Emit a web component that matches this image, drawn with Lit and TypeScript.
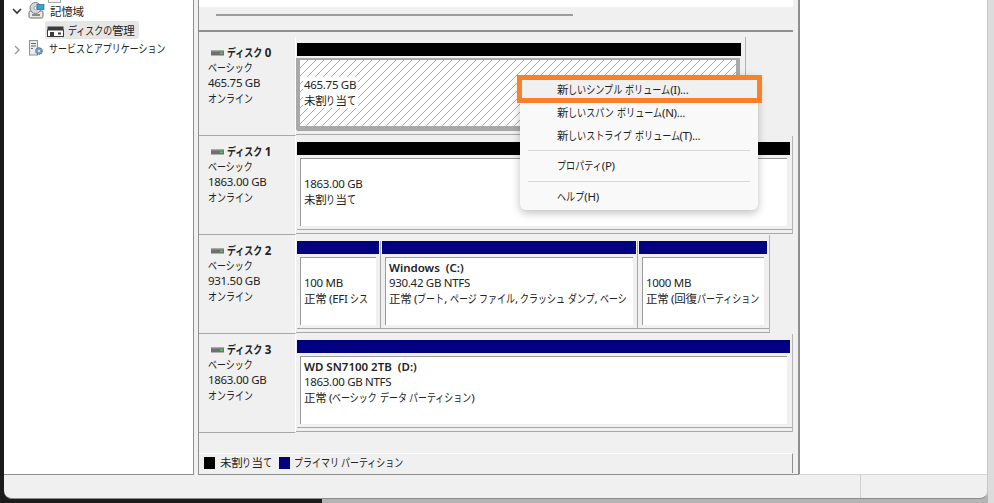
import { LitElement, html, css, svg } from "lit";
import { customElement } from "lit/decorators.js";

interface Part { w: number; color: string; lines: [string, string, string]; }
interface Disk { name: string; size: string; frame: number; parts: Part[]; selected?: boolean; }

const NAVY = "#000080";
const DISKS: Disk[] = [
  { name: "ディスク 0", size: "465.75 GB", frame: 450, selected: true,
    parts: [{ w: 444, color: "#000", lines: ["", "465.75 GB", "未割り当て"] }] },
  { name: "ディスク 1", size: "1863.00 GB", frame: 497,
    parts: [{ w: 493, color: "#000", lines: ["", "1863.00 GB", "未割り当て"] }] },
  { name: "ディスク 2", size: "931.50 GB", frame: 474,
    parts: [
      { w: 82, color: NAVY, lines: ["", "100 MB", "正常 (EFI シス"] },
      { w: 254, color: NAVY, lines: ["Windows  (C:)", "930.42 GB NTFS", "正常 (ブート, ページ ファイル, クラッシュ ダンプ, ベーシ"] },
      { w: 128, color: NAVY, lines: ["", "1000 MB", "正常 (回復パーティション"] },
    ] },
  { name: "ディスク 3", size: "1863.00 GB", frame: 497,
    parts: [{ w: 493, color: NAVY, lines: ["WD SN7100 2TB  (D:)", "1863.00 GB NTFS", "正常 (ベーシック データ パーティション)"] }] },
];

/* The reference face has narrow kana: runs of kana are set condensed, with the
   advance they would lose removed from the flow. */
const KANA_EM = 11.5;
const SCALE = 0.78;
function t(s: string, scale = SCALE, em = KANA_EM) {
  return s.split(/([\u3040-\u30FF]+)/).filter(Boolean).map((run) =>
    /^[\u3040-\u30FF]/.test(run)
      ? html`<span class="k" style="transform:scaleX(${scale});margin-right:${(-run.length * em * (1 - scale)).toFixed(2)}px">${run}</span>`
      : html`<span class="l">${run}</span>`);
}

const diskGlyph = svg`<svg class="dglyph" width="14" height="6" viewBox="0 0 14 6">
  <rect x="0" y="0" width="13" height="5.5" rx="0.6" fill="#6f6f6f"/>
  <rect x="0" y="0" width="13" height="1.4" fill="#a9a9a9"/>
  <rect x="9" y="2.5" width="3" height="1.5" fill="#57c25a"/>
</svg>`;

const storageIcon = svg`<svg class="ticon" width="17" height="17" viewBox="0 0 17 17">
  <rect x="1" y="9" width="14" height="7" rx="1.5" fill="#e9e9e6" stroke="#6d6d62"/>
  <rect x="4" y="12" width="8" height="2" fill="#8b8b80"/>
  <circle cx="7.5" cy="6" r="5.5" fill="#d5d8da" stroke="#7c8185"/>
  <circle cx="7.5" cy="6" r="1.6" fill="#fff" stroke="#7c8185" stroke-width=".7"/>
  <rect x="9" y="2.5" width="7" height="5" fill="#3ba0d2" stroke="#1f6f98" stroke-width=".7"/>
</svg>`;

const mgmtIcon = svg`<svg class="ticon" width="17" height="11" viewBox="0 0 17 11">
  <rect x="0.5" y="0.5" width="16" height="4" fill="#3b3b3b"/>
  <rect x="0.5" y="4" width="16" height="6.5" fill="#fbfbfb" stroke="#3b3b3b"/>
  <rect x="3" y="6" width="4" height="4.5" fill="#3b3b3b"/>
  <rect x="11" y="6.5" width="3" height="2" fill="#3b3b3b"/>
</svg>`;

const serviceIcon = svg`<svg class="ticon" width="16" height="16" viewBox="0 0 16 16">
  <rect x="1.5" y="0.5" width="8" height="14.5" fill="#e8eaec" stroke="#8b949c"/>
  <rect x="3" y="3" width="5" height="1" fill="#5f6b75"/>
  <rect x="3" y="5.5" width="5" height="1" fill="#5f6b75"/>
  <rect x="3" y="8" width="2" height="1" fill="#5f6b75"/>
  <circle cx="11" cy="11" r="3.2" fill="#7fa3c4" stroke="#55779a" stroke-width="1.4" stroke-dasharray="1.3 .7"/>
  <circle cx="11" cy="11" r="1.1" fill="#eef3f7"/>
</svg>`;

@customElement("app-root")
export class AppRoot extends LitElement {
  static styles = css`
    :host {
      display: block;
      width: 994px;
      height: 503px;
      overflow: hidden;
      background:
        linear-gradient(#dcdcdc, #dcdcdc) right top / 6px 100% no-repeat,
        linear-gradient(90deg, #1b1b1b 0 322px, #b4b4b4 322px);
      position: relative;
      font-family: "Noto Sans", "Noto Sans CJK JP", sans-serif;
      font-size: 11.5px;
      color: #222;
    }
    .k { display: inline-block; white-space: pre; transform-origin: 0 50%; }
    .l { white-space: pre; letter-spacing: -0.3px; }
    .win {
      margin-left: 4px;
      width: 984px;
      height: 499px;
      box-sizing: border-box;
      background: #f0f0f0;
      border-right: 1px solid #c8c8c8;
      border-bottom: 1px solid #8c8c8c;
      border-radius: 0 0 8px 8px;
      display: flex;
      flex-direction: column;
      overflow: hidden;
    }
    .main { display: flex; height: 475px; flex: none; box-sizing: border-box; }
    .tree {
      width: 190px;
      box-sizing: border-box;
      background: #fff;
      border-right: 1px solid #8f8f8f;
      border-bottom: 1px solid #8f8f8f;
      padding-top: 2px;
      flex: none;
      display: flex;
      flex-direction: column;
    }
    .tnode { display: flex; align-items: center; height: 17px; white-space: nowrap; }
    .chev { width: 24px; flex: none; display: flex; justify-content: flex-end; box-sizing: border-box; }
    .chev.down { padding: 2px 6px 0 0; }
    .chev.next { padding: 5px 7px 0 0; }
    .l1 .ticon { margin-right: 5px; flex: none; }
    .sel-row { margin: 2px 0 0 41px; height: 18px; width: 94px; background: #e6e6e6; border-radius: 3px; display: flex; align-items: center; padding-left: 2px; box-sizing: border-box; white-space: nowrap; flex: none; }
    .sel-row .ticon { margin-right: 4px; margin-top: 3px; flex: none; }
    .gap { width: 4px; flex: none; }
    .center {
      width: 600px;
      flex: none;
      box-sizing: border-box;
      border-left: 1px solid #8f8f8f;
      border-bottom: 1px solid #8f8f8f;
      display: flex;
      flex-direction: column;
      padding-right: 5px;
    }
    .top {
      height: 32px;
      box-sizing: border-box;
      background: linear-gradient(#fff 0 7px, #f0f0f0 7px);
      border-bottom: 2px solid #8f8f8f;
      padding: 14px 0 0 17px;
      flex: none;
    }
    .hbar { width: 357px; height: 2px; background: #9c9c9c; }
    .list { padding-top: 5px; flex: none; }
    .row { display: flex; height: 99px; box-sizing: border-box; }
    .label {
      width: 97px;
      flex: none;
      box-sizing: border-box;
      background: #f0f0f0;
      border-right: 1px solid #fff;
      border-bottom: 1px solid #a8a8a8;
      padding: 8px 0 0 9px;
      line-height: 15.2px;
      white-space: nowrap;
    }
    .title { display: flex; align-items: center; font-weight: 700; margin-left: 3px; }
    .dglyph { margin-right: 2px; flex: none; }
    .frame {
      box-sizing: border-box;
      height: 98px;
      padding: 6px 0 0 1px;
      border-right: 1px solid #b4b4b4;
      border-bottom: 1px solid #a8a8a8;
    }
    .parts { display: flex; height: 88px; border-bottom: 1px solid #a8a8a8; box-sizing: border-box; }
    .sep { width: 1px; background: #a8a8a8; margin: 0 1px; flex: none; }
    .part { flex: none; }
    .bar { height: 13px; }
    .vol {
      margin: 3px 3px 0 3px;
      height: 68px;
      box-sizing: border-box;
      background: #fff;
      border-top: 1px solid #9a9a9a;
      border-left: 1px solid #9a9a9a;
      padding: 1.5px 0 0 3px;
      line-height: 15.5px;
      white-space: nowrap;
      overflow: hidden;
    }
    .vol.selected {
      margin: 2px 1px 0 -1px;
      height: 72px;
      border: solid #a9a9a9;
      border-width: 2px 4px 4px 4px;
      background: repeating-linear-gradient(135deg, #fff 0 4.96px, #aaa 4.96px 5.66px);
      padding: 1.5px 0 0 3px;
    }
    .vol.selected .ln > span { display: inline-block; background: #fff; padding: 0 2px 0 1px; margin-left: -1px; }
    .vol.selected .ln { padding-left: 1px; }
    .ln { height: 15.5px; }
    .strong { font-weight: 600; }
    .strong .l { letter-spacing: 0; }
    .legend {
      margin-top: 20px;
      height: 20px;
      box-sizing: border-box;
      border-top: 1px solid #fff;
      border-right: 1px solid #8f8f8f;
      display: flex;
      align-items: center;
      padding: 0 0 2px 5px;
      white-space: nowrap;
    }
    .sw { width: 11px; height: 12px; flex: none; }
    .lt { margin: 0 7px 2px 5px; }
    .lt.second { margin-left: 4px; }
    .right { flex: 1; background: #fff; border-left: 2px solid #8f8f8f; border-bottom: 1px solid #d4d4d4; }
    .status { flex: 1; display: flex; }
    .s1 { width: 856px; border-right: 1px solid #d0d0d0; flex: none; }

    .menu {
      position: absolute;
      left: 520px;
      top: 75px;
      width: 238px;
      height: 135px;
      box-sizing: border-box;
      background: #f9f9f9;
      border-radius: 6px;
      box-shadow: 0 3px 9px rgba(0, 0, 0, 0.25);
      padding-top: 3px;
      color: #1f1f1f;
    }
    .item { height: 23px; line-height: 23px; padding-left: 37px; white-space: nowrap; }
    .item.hot { background: #f0f0f0; }
    .msep { height: 1px; background: #d9d9d9; margin: 3px 8px; }
    .msep.b { margin-top: 4px; }
    .orange {
      position: absolute;
      left: 517px;
      top: 75px;
      width: 245px;
      height: 28px;
      box-sizing: border-box;
      border: 5px solid #f98127;
      pointer-events: none;
    }
    .topstub { position: absolute; left: 48px; top: 0; width: 13px; height: 3px; background: #f4f4f4; border: 1px solid #aaa; border-top: 0; box-sizing: border-box; }
  `;

  private renderDisk(d: Disk) {
    const parts = d.parts.flatMap((p, i) => {
      const el = html`<div class="part" style="width:${p.w}px">
        <div class="bar" style="background:${p.color}"></div>
        <div class="vol ${d.selected ? "selected" : ""}">
          ${p.lines.map((l, n) =>
            html`<div class="ln ${n === 0 ? "strong" : ""}"><span>${t(l)}</span></div>`)}
        </div>
      </div>`;
      return i ? [html`<div class="sep"></div>`, el] : [el];
    });
    return html`<div class="row">
      <div class="label">
        <div class="title">${diskGlyph}<span>${t(d.name)}</span></div>
        <div>${t("ベーシック")}</div>
        <div>${t(d.size)}</div>
        <div>${t("オンライン")}</div>
      </div>
      <div class="frame" style="width:${d.frame}px">
        <div class="parts">${parts}</div>
      </div>
    </div>`;
  }

  render() {
    const M = 0.79;
    return html`
      <div class="win">
        <div class="main">
          <div class="tree">
            <div class="tnode l1">
              <div class="chev down"><svg width="10" height="7" viewBox="0 0 10 7"><path d="M1 1l4 4 4-4" fill="none" stroke="#333" stroke-width="1.6"/></svg></div>
              ${storageIcon}<span>${t("記憶域")}</span>
            </div>
            <div class="sel-row">${mgmtIcon}<span>${t("ディスクの管理")}</span></div>
            <div class="tnode l1">
              <div class="chev next"><svg width="7" height="10" viewBox="0 0 7 10"><path d="M1 1l4 4-4 4" fill="none" stroke="#9a9a9a" stroke-width="1.4"/></svg></div>
              ${serviceIcon}<span>${t("サービスとアプリケーション")}</span>
            </div>
          </div>
          <div class="gap"></div>
          <div class="center">
            <div class="top"><div class="hbar"></div></div>
            <div class="list">${DISKS.map((d) => this.renderDisk(d))}</div>
            <div class="legend">
              <div class="sw" style="background:#000"></div><span class="lt">${t("未割り当て")}</span>
              <div class="sw" style="background:${NAVY}"></div><span class="lt second">${t("プライマリ パーティション")}</span>
            </div>
          </div>
          <div class="right"></div>
        </div>
        <div class="status"><div class="s1"></div></div>
      </div>
      <div class="topstub"></div>
      <div class="menu">
        <div class="item hot">${t("新しいシンプル ボリューム(I)...", M)}</div>
        <div class="item">${t("新しいスパン ボリューム(N)...", M)}</div>
        <div class="item">${t("新しいストライプ ボリューム(T)...", M)}</div>
        <div class="msep"></div>
        <div class="item">${t("プロパティ(P)", M)}</div>
        <div class="msep b"></div>
        <div class="item">${t("ヘルプ(H)", M)}</div>
      </div>
      <div class="orange"></div>
    `;
  }
}
